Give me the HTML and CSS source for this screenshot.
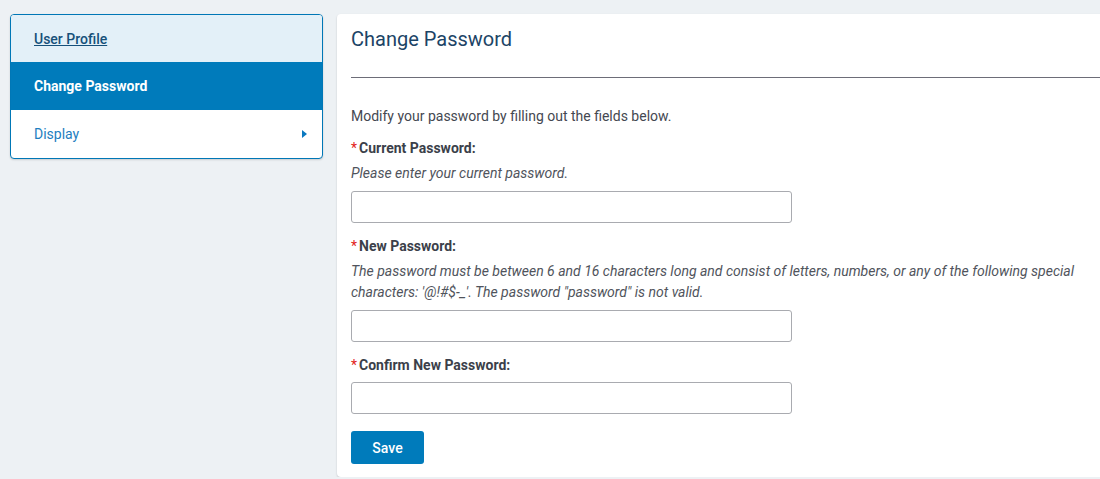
FILE: index.html
```html
<!DOCTYPE html>
<html lang="en">
<head>
    <meta charset="UTF-8">
    <title>Change Password</title>
    <link rel="stylesheet" href="styles.css">
</head>
<body>
    <div class="layout">
        <!-- Side menu -->
        <nav class="side-menu">
            <a href="#" class="menu-item visited">User Profile</a>
            <a href="#" class="menu-item active">Change Password</a>
            <a href="#" class="menu-item">Display <span class="caret"></span></a>
        </nav>

        <!-- Main panel -->
        <div class="panel">
            <h1>Change Password</h1>
            <hr>
            <p class="intro">Modify your password by filling out the fields below.</p>
            <form class="pw-form">
                <div class="field">
                    <label><span class="req">*</span>Current Password:</label>
                    <p class="hint">Please enter your current password.</p>
                    <input type="password">
                </div>
                <div class="field">
                    <label><span class="req">*</span>New Password:</label>
                    <p class="hint">The password must be between 6 and 16 characters long and consist of letters, numbers, or any of the following special characters: '@!#$-_'. The password "password" is not valid.</p>
                    <input type="password">
                </div>
                <div class="field">
                    <label><span class="req">*</span>Confirm New Password:</label>
                    <input type="password">
                </div>
                <button type="submit">Save</button>
            </form>
        </div>
    </div>
</body>
</html>
```

FILE: styles.css
```css
html {
    overflow: hidden;
}

body {
    margin: 0;
    padding: 14px 0 0 10px;
    font-family: 'Roboto', 'Liberation Sans', sans-serif;
    font-size: 14px;
    background: #edf1f4;
    color: #3b3f48;
}

.layout {
    display: flex;
    align-items: flex-start;
    gap: 14px;
    margin-right: -20px;
}

/* Side menu */
.side-menu {
    width: 311px;
    flex: none;
    display: flex;
    flex-direction: column;
    background: white;
    border: 1px solid #0077b6;
    border-radius: 4px;
    box-shadow: 0 1px 2px rgba(0, 0, 0, 0.15);
    overflow: hidden;
}

.menu-item {
    display: flex;
    align-items: center;
    justify-content: space-between;
    height: 48px;
    padding: 0 15px 0 23px;
    color: #1d7ec0;
    text-decoration: none;
}

.menu-item.visited {
    height: 47px;
    background: #e3f0f8;
    color: #16507a;
    font-weight: 500;
    text-decoration: underline;
}

.menu-item.active {
    background: #007bbb;
    color: white;
    font-weight: 700;
}

.caret {
    width: 0;
    height: 0;
    border-top: 4px solid transparent;
    border-bottom: 4px solid transparent;
    border-left: 5px solid #0a78c0;
}

/* Main panel */
.panel {
    flex: 1;
    background: white;
    border-radius: 4px;
    box-shadow: 0 1px 2px rgba(0, 0, 0, 0.18);
    padding: 13px 0 13px 14px;
    min-height: 437px;
}

h1 {
    margin: 0;
    font-size: 20px;
    font-weight: 400;
    line-height: 24px;
    color: #1c4466;
}

hr {
    margin: 26px 0 0;
    border: none;
    border-top: 1px solid #6d6d78;
}

.intro {
    margin: 28px 0 0;
    line-height: 20px;
    color: #444851;
}

.pw-form {
    display: flex;
    flex-direction: column;
    align-items: flex-start;
}

.field {
    display: flex;
    flex-direction: column;
    margin-top: 12px;
}

.field + .field {
    margin-top: 13px;
}

label {
    font-weight: 700;
    line-height: 20px;
    color: #3b3f4a;
}

.req {
    color: #e2231a;
    font-weight: 400;
    margin-right: 2px;
}

.hint {
    margin: 5px 0 0;
    font-style: italic;
    line-height: 21px;
    color: #50545c;
    padding-right: 20px;
}

input {
    width: 441px;
    height: 32px;
    box-sizing: border-box;
    margin-top: 7px;
    border: 1px solid #a9abb0;
    border-radius: 3px;
    font-family: inherit;
    outline: none;
}

button {
    margin-top: 17px;
    width: 73px;
    height: 33px;
    border: none;
    border-radius: 3px;
    background: #007bbb;
    color: white;
    font-family: inherit;
    font-size: 14px;
    font-weight: 500;
    cursor: pointer;
}
```
